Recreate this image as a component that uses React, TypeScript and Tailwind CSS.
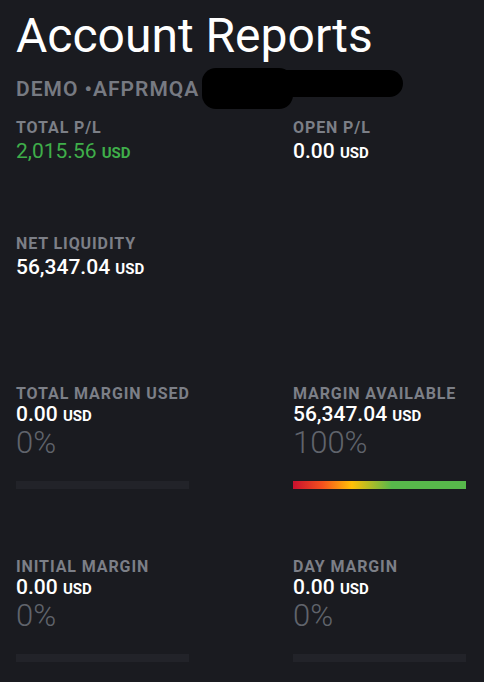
import React from 'react';

// Account reports screen — dark trading dashboard panel.
type Metric = {
  label: string;
  value: string;
  tone?: 'green' | 'white';
  percent?: string;
  bar?: 'empty' | 'gradient';
};

const Label = ({ children }: { children: React.ReactNode }) => (
  <p className="text-[16px] leading-[20px] font-bold tracking-[0.9px] text-[#7c7f87]">{children}</p>
);

function MetricBlock({ m }: { m: Metric }) {
  return (
    <div>
      <Label>{m.label}</Label>
      <p
        className={`text-[21px] ${m.percent ? 'leading-[20px]' : 'mt-px leading-[24px]'} ${
          m.tone === 'green' ? 'font-normal text-[#3fae4a]' : 'font-medium text-white'
        }`}
      >
        {m.value} <span className="text-[15px] font-bold">USD</span>
      </p>
      {m.percent && (
        <p className="mt-[2px] text-[31px] leading-[30px] font-light text-[#60646c]">{m.percent}</p>
      )}
      {m.bar === 'empty' && <div className="mt-[23px] h-[8px] w-[173px] bg-[#222329]" />}
      {m.bar === 'gradient' && (
        <div className="mt-[23px] h-[8px] w-[173px] bg-[linear-gradient(90deg,#c8102e_0%,#f4511e_17%,#ffc107_34%,#57b94b_57%,#57b94b_100%)]" />
      )}
    </div>
  );
}

export default function App() {
  return (
    <div className="min-h-screen bg-[#1a1b20] pl-4 pt-[12px] font-['Roboto',sans-serif]">
      <h1 className="text-[48px] leading-[48px] font-normal text-white">Account Reports</h1>

      <div className="relative mt-[16px] h-[26px]">
        <p className="text-[21px] leading-[26px] font-semibold tracking-[1px] text-[#777a82]">DEMO •AFPRMQA</p>
        {/* redaction blobs */}
        <div className="absolute left-[186px] top-[-8px] h-[41px] w-[91px] rounded-[14px] bg-black" />
        <div className="absolute left-[186px] top-[-6px] h-[27px] w-[201px] rounded-full bg-black" />
      </div>

      <div className="mt-[16px] grid grid-cols-[277px_1fr]">
        <MetricBlock m={{ label: 'TOTAL P/L', value: '2,015.56', tone: 'green' }} />
        <MetricBlock m={{ label: 'OPEN P/L', value: '0.00' }} />
      </div>

      <div className="mt-[69px] grid grid-cols-[277px_1fr]">
        <MetricBlock m={{ label: 'NET LIQUIDITY', value: '56,347.04' }} />
        <div />
      </div>

      <div className="mt-[103px] grid grid-cols-[277px_1fr]">
        <MetricBlock m={{ label: 'TOTAL MARGIN USED', value: '0.00', percent: '0%', bar: 'empty' }} />
        <MetricBlock m={{ label: 'MARGIN AVAILABLE', value: '56,347.04', percent: '100%', bar: 'gradient' }} />
      </div>

      <div className="mt-[68px] grid grid-cols-[277px_1fr]">
        <MetricBlock m={{ label: 'INITIAL MARGIN', value: '0.00', percent: '0%', bar: 'empty' }} />
        <MetricBlock m={{ label: 'DAY MARGIN', value: '0.00', percent: '0%', bar: 'empty' }} />
      </div>
    </div>
  );
}
